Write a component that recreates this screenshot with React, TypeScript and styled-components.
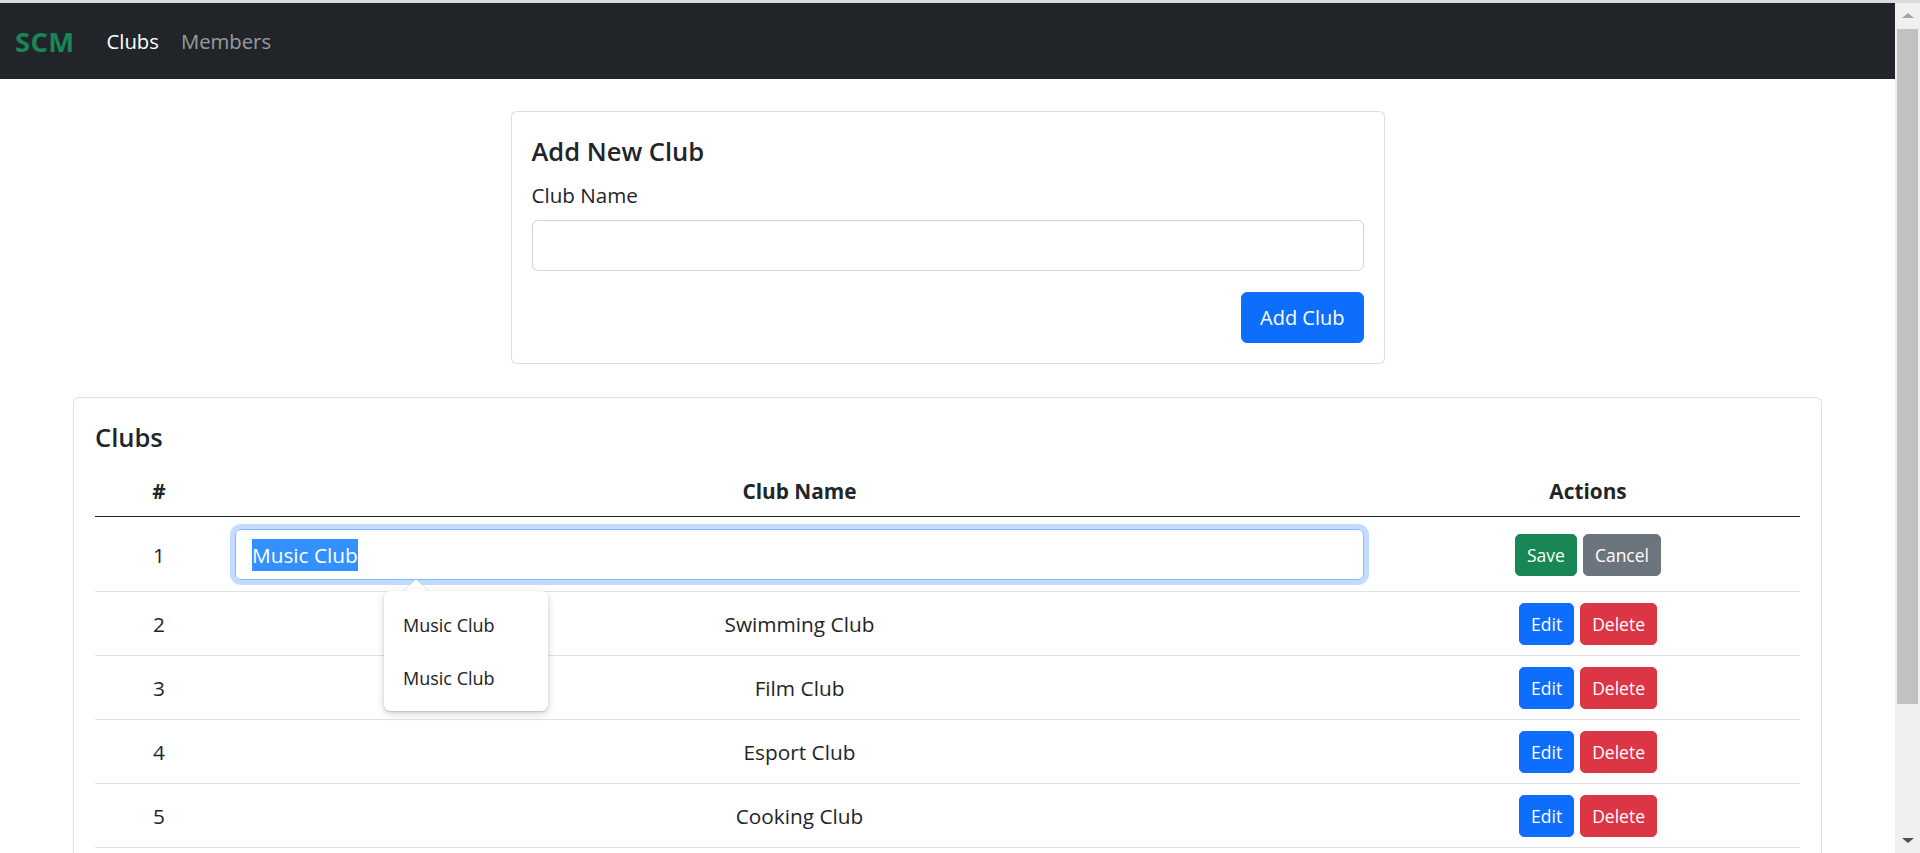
import React from 'react';
import styled, { createGlobalStyle } from 'styled-components';

const clubs = [
  { id: 1, name: 'Music Club' },
  { id: 2, name: 'Swimming Club' },
  { id: 3, name: 'Film Club' },
  { id: 4, name: 'Esport Club' },
  { id: 5, name: 'Cooking Club' }
];

const suggestions = ['Music Club', 'Music Club'];

const colors = {
  primary: '#0d6efd',
  danger: '#dc3545',
  success: '#198754',
  secondary: '#6c757d'
};

type Variant = keyof typeof colors;

export default function App() {
  const editingId = 1;

  return (
    <>
      <GlobalStyle />
      <Page>
        <Navbar>
          <Brand>SCM</Brand>
          <NavLink $active>Clubs</NavLink>
          <NavLink>Members</NavLink>
        </Navbar>
        <Main>
          <AddCard>
            <CardTitle>Add New Club</CardTitle>
            <Label htmlFor="club-name">Club Name</Label>
            <TextInput id="club-name" type="text" />
            <FormActions>
              <Button $variant="primary">Add Club</Button>
            </FormActions>
          </AddCard>

          <ListCard>
            <CardTitle>Clubs</CardTitle>
            <Table>
              <colgroup>
                <col style={{ width: 128 }} />
                <col />
                <col style={{ width: 424 }} />
              </colgroup>
              <thead>
                <tr>
                  <HeadCell>#</HeadCell>
                  <HeadCell>Club Name</HeadCell>
                  <HeadCell>Actions</HeadCell>
                </tr>
              </thead>
              <tbody>
                {clubs.map(club => {
                  const editing = club.id === editingId;
                  return (
                    <tr key={club.id}>
                      <Cell>{club.id}</Cell>
                      <Cell>
                        {editing ? (
                          <EditField>
                            <SelectedText>{club.name}</SelectedText>
                            <Suggestions>
                              {suggestions.map((s, i) => (
                                <SuggestionItem key={i}>{s}</SuggestionItem>
                              ))}
                            </Suggestions>
                          </EditField>
                        ) : (
                          club.name
                        )}
                      </Cell>
                      <Cell>
                        <ActionGroup>
                          {editing ? (
                            <>
                              <ActionButton $variant="success">Save</ActionButton>
                              <ActionButton $variant="secondary">Cancel</ActionButton>
                            </>
                          ) : (
                            <>
                              <ActionButton $variant="primary">Edit</ActionButton>
                              <ActionButton $variant="danger">Delete</ActionButton>
                            </>
                          )}
                        </ActionGroup>
                      </Cell>
                    </tr>
                  );
                })}
              </tbody>
            </Table>
          </ListCard>
        </Main>
      </Page>

      <Scrollbar>
        <ScrollArrow>
          <ArrowUp />
        </ScrollArrow>
        <ScrollThumb />
        <ScrollSpacer />
        <ScrollArrow>
          <ArrowDown />
        </ScrollArrow>
      </Scrollbar>
    </>
  );
}

const GlobalStyle = createGlobalStyle`
  html {
    overflow: hidden;
  }
  body {
    margin: 0;
    border-top: 3px solid #dadada;
    background: #fff;
    color: #212529;
    font-family: "Open Sans", "Noto Sans", sans-serif;
  }
  * {
    box-sizing: border-box;
  }
`;

const Page = styled.div`
  margin-right: 25px;
`;

const Navbar = styled.nav`
  display: flex;
  align-items: center;
  height: 76px;
  padding: 0 15px;
  background-color: #212529;
`;

const Brand = styled.a`
  margin-right: 21px;
  color: ${colors.success};
  font-size: 27.5px;
  font-weight: 700;
  letter-spacing: 0.3px;
`;

const NavLink = styled.a<{ $active?: boolean }>`
  padding: 0 11px;
  font-size: 20.3px;
  color: ${props => (props.$active ? '#fff' : 'rgba(255, 255, 255, 0.55)')};
`;

const Main = styled.main`
  padding-top: 32px;
`;

const Card = styled.section`
  border: 1px solid rgba(0, 0, 0, 0.125);
  border-radius: 6px;
  background: #fff;
  padding: 20px;
`;

const AddCard = styled(Card)`
  width: 874px;
  margin: 0 auto;
`;

const ListCard = styled(Card)`
  margin: 33px 73px 0;
  padding: 20px 21px;
`;

const CardTitle = styled.h5`
  margin: 0 0 14px;
  padding-top: 4px;
  font-size: 25.5px;
  font-weight: 600;
  line-height: 30px;
`;

const Label = styled.label`
  display: block;
  margin-bottom: 10px;
  font-size: 20.6px;
  line-height: 30px;
`;

const TextInput = styled.input`
  display: block;
  width: 100%;
  height: 51px;
  padding: 0 15px;
  border: 1px solid #ced4da;
  border-radius: 6px;
  font: inherit;
  font-size: 20px;
  outline: none;
`;

const FormActions = styled.div`
  display: flex;
  justify-content: flex-end;
  margin-top: 21px;
`;

const Button = styled.button<{ $variant: Variant }>`
  height: 51px;
  padding: 0 18px;
  border: 1px solid ${props => colors[props.$variant]};
  border-radius: 6px;
  background-color: ${props => colors[props.$variant]};
  color: #fff;
  font-family: inherit;
  font-size: 20px;
`;

const Table = styled.table`
  width: 100%;
  border-collapse: collapse;
  table-layout: fixed;
  font-size: 20.8px;
  line-height: 30px;
  text-align: center;
`;

const HeadCell = styled.th`
  padding: 10px 12px;
  font-weight: 700;
  border-bottom: 1px solid #212529;
`;

const Cell = styled.td`
  padding: 11px 12px 10px;
  vertical-align: middle;
  border-bottom: 1px solid #dee2e6;
`;

const EditField = styled.div`
  position: relative;
  display: flex;
  align-items: center;
  height: 51px;
  margin: 1px 0;
  padding: 0 16px;
  border: 1px solid #86b7fe;
  border-radius: 6px;
  box-shadow: 0 0 0 5px rgba(13, 110, 253, 0.25);
  text-align: left;
`;

const SelectedText = styled.span`
  display: inline-block;
  line-height: 32px;
  background-color: #3390ff;
  color: #fff;
`;

const Suggestions = styled.ul`
  position: absolute;
  top: calc(100% + 12px);
  left: 148px;
  z-index: 2;
  width: 164px;
  margin: 0;
  padding: 7px 0;
  list-style: none;
  background: #fff;
  border-radius: 6px;
  box-shadow: 0 1px 2px rgba(0, 0, 0, 0.18), 0 3px 8px rgba(0, 0, 0, 0.16);

  &::before,
  &::after {
    content: '';
    position: absolute;
    left: 19px;
    border-left: 13px solid transparent;
    border-right: 13px solid transparent;
  }
  &::before {
    top: -13px;
    border-bottom: 13px solid rgba(0, 0, 0, 0.12);
  }
  &::after {
    top: -12px;
    border-bottom: 13px solid #fff;
  }
`;

const SuggestionItem = styled.li`
  display: flex;
  align-items: center;
  height: 53px;
  padding: 0 19px;
  font-size: 18px;
  color: #202124;
`;

const ActionGroup = styled.div`
  display: flex;
  justify-content: center;
  gap: 6px;
`;

const ActionButton = styled.button<{ $variant: Variant }>`
  height: 42px;
  padding: 0 11px;
  border: 1px solid ${props => colors[props.$variant]};
  border-radius: 5px;
  background-color: ${props => colors[props.$variant]};
  color: #fff;
  font-family: inherit;
  font-size: 17.5px;
`;

const Scrollbar = styled.div`
  position: fixed;
  top: 3px;
  right: 0;
  bottom: 0;
  width: 25px;
  display: flex;
  flex-direction: column;
  background: #f0f0f0;
`;

const ScrollArrow = styled.div`
  display: flex;
  align-items: center;
  justify-content: center;
  height: 25px;
  flex-shrink: 0;
`;

const ArrowUp = styled.span`
  border-left: 6px solid transparent;
  border-right: 6px solid transparent;
  border-bottom: 5px solid #a3a3a3;
`;

const ArrowDown = styled.span`
  border-left: 6px solid transparent;
  border-right: 6px solid transparent;
  border-top: 5px solid #505050;
`;

const ScrollThumb = styled.div`
  height: 675px;
  margin: 1px 2px 0;
  background: #c1c1c1;
`;

const ScrollSpacer = styled.div`
  flex: 1;
`;
